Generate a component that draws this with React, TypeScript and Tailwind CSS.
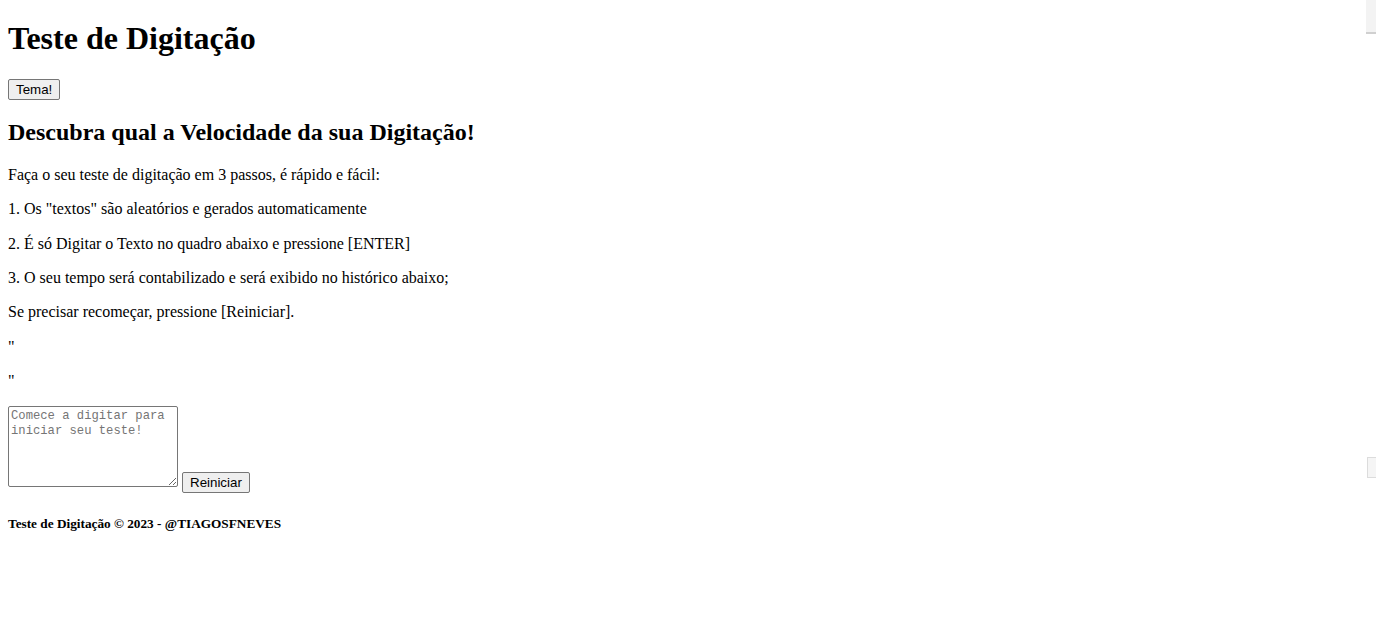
const steps = [
  'Faça o seu teste de digitação em 3 passos, é rápido e fácil:',
  '1. Os "textos" são aleatórios e gerados automaticamente',
  '2. É só Digitar o Texto no quadro abaixo e pressione [ENTER]',
  '3. O seu tempo será contabilizado e será exibido no histórico abaixo;',
  'Se precisar recomeçar, pressione [Reiniciar].',
  '"',
  '"',
];

function NativeButton({ label }: { label: string }) {
  return (
    <button className="h-[21px] px-[7px] rounded-[2px] border border-[#767676] bg-[#efefef] text-[13.33px] leading-[16px] text-black font-['Liberation_Sans',Arial,sans-serif]">
      {label}
    </button>
  );
}

export default function App() {
  return (
    <div className="relative flow-root min-h-[621px] bg-white text-black font-['Liberation_Serif','Times_New_Roman',serif]">
      <div className="px-2">
        <h1 className="mt-[19.5px] mb-[19.5px] text-[32px] leading-[37px] font-bold">Teste de Digitação</h1>
        <div className="flex items-start h-[22px] pt-[3px] box-content">
          <NativeButton label="Tema!" />
        </div>
        <h2 className="mt-[16.9px] mb-[19.92px] text-[24px] leading-[28px] font-bold">Descubra qual a Velocidade da sua Digitação!</h2>
        {steps.map((s, i) => (
          <p key={i} className="my-4 text-[16px] leading-[18.4px]">
            {s}
          </p>
        ))}
        <div className="flex items-start gap-1 -mt-[0.4px] h-[88px]">
          <textarea
            readOnly
            placeholder="Comece a digitar para iniciar seu teste!"
            className="w-[170px] h-[81px] px-[2px] py-[2px] rounded-[2px] border border-[#767676] bg-white text-[12.2px] leading-[15px] font-['Liberation_Mono',Consolas,monospace] placeholder:text-[#757575] resize-y outline-none"
          />
          <div className="flex mt-[66px]">
            <NativeButton label="Reiniciar" />
          </div>
        </div>
        <h5 className="my-[22.18px] text-[13.28px] leading-[15px] font-bold">Teste de Digitação © 2023 - @TIAGOSFNEVES</h5>
      </div>

      {/* bits of offscreen elements peeking at the right edge */}
      <div className="absolute top-0 right-0 w-[10px] h-[34px] bg-[#f3f3f3] border-b-2 border-[#d0d0d0]" />
      <div className="absolute top-[457px] right-0 w-[9px] h-[21px] bg-[#f5f5f5] border border-r-0 border-[#dcdcdc]" />
    </div>
  );
}
